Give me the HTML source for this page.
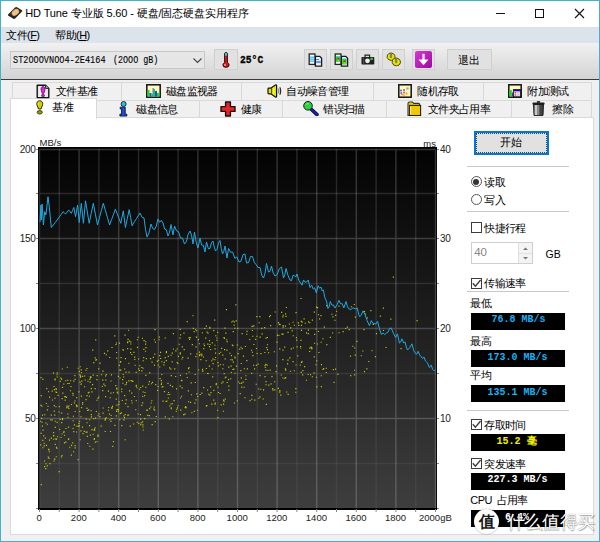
<!DOCTYPE html><html><head><meta charset="utf-8"><style>
*{margin:0;padding:0;box-sizing:border-box}
html,body{width:600px;height:542px;overflow:hidden;background:#f0f0f0;font-family:"Liberation Sans",sans-serif;position:relative}
.a{position:absolute}
.t{position:absolute;white-space:nowrap;line-height:1}
.btn{position:absolute;background:#e1e1e1;border:1px solid #cfcfcf}
.lcd{position:absolute;background:#000;font-family:"Liberation Mono",monospace;font-weight:bold;white-space:nowrap;line-height:1}
</style></head><body>
<div class="a" style="left:0;top:0;width:600px;height:542px;border:1px solid #40b2cf;background:#f0f0f0"></div>
<div class="a" style="left:1px;top:1px;width:598px;height:26px;background:#fff"></div>
<div class="a" style="left:1px;top:27px;width:598px;height:15.5px;background:#dce3eb"></div>
<div class="a" style="left:1px;top:42.5px;width:598px;height:36.5px;background:linear-gradient(#f1f1f1,#d3d3d3)"></div>
<div class="a" style="left:1px;top:79px;width:598px;height:1px;background:#3a3a3a"></div>
<svg class="a" style="left:7px;top:6px" width="16" height="14" viewBox="0 0 16 14">
<path d="M1 8.5L8 1.5Q9 0.8 10 1.3L15 4.2Q15.8 4.8 15 5.6L8.2 12.6Q7.4 13.3 6.4 12.8L1.4 9.8Q0.6 9.2 1 8.5Z" fill="#262626"/>
<ellipse cx="8.4" cy="6.4" rx="4.2" ry="2.9" transform="rotate(-40 8.4 6.4)" fill="#f0b060"/>
<ellipse cx="8.4" cy="6.4" rx="2.6" ry="1.7" transform="rotate(-40 8.4 6.4)" fill="#f6cc90"/>
<circle cx="8.4" cy="6.4" r="1" fill="#b8b8b8"/></svg>
<div class="t" style="left:25.3px;top:8px;font-size:11px;color:#000;letter-spacing:-0.12px">HD Tune 专业版 5.60 - 硬盘/固态硬盘实用程序</div>
<div class="a" style="left:496px;top:13px;width:9px;height:1px;background:#111"></div>
<div class="a" style="left:535px;top:9px;width:9px;height:9px;border:1px solid #111"></div>
<svg class="a" style="left:574px;top:8px" width="11" height="11"><path d="M1 1L10 10M10 1L1 10" stroke="#111" stroke-width="1.1"/></svg>
<div class="t" style="left:6.3px;top:30px;font-size:11px;color:#000;letter-spacing:-0.6px;">文件(<u>F</u>)</div>
<div class="t" style="left:55.3px;top:30px;font-size:11px;color:#000;letter-spacing:-0.6px;">帮助(<u>H</u>)</div>
<div class="a" style="left:10px;top:51px;width:195px;height:18px;background:#e6e6e6;border:1px solid #c8c8c8"></div>
<div class="t" style="left:13.2px;top:54.5px;font-size:10.5px;color:#000;-webkit-text-stroke:0.1px #000;font-family:&quot;Liberation Mono&quot;,monospace;transform-origin:0 0;transform:scaleX(0.816)">ST2OOOVNOO4-2E4164</div>
<div class="t" style="left:112.5px;top:54.5px;font-size:10.5px;color:#000;-webkit-text-stroke:0.1px #000;font-family:&quot;Liberation Mono&quot;,monospace;transform-origin:0 0;transform:scaleX(0.80)">(2OOO gB)</div>
<svg class="a" style="left:193px;top:58px" width="9" height="6"><path d="M0.5 0.5L4.5 4.5L8.5 0.5" stroke="#444" fill="none" stroke-width="1.1"/></svg>
<div class="btn" style="left:214px;top:49px;width:24px;height:21px"></div>
<svg class="a" style="left:221px;top:51.5px" width="10" height="16" viewBox="0 0 10 16">
<path d="M3.6 2Q3.6 0.6 5 0.6Q6.4 0.6 6.4 2V10.4Q8.1 11.4 8.1 13Q8.1 15.3 5 15.3Q1.9 15.3 1.9 13Q1.9 11.4 3.6 10.4Z" fill="#e81010" stroke="#151515" stroke-width="1"/>
<rect x="4.1" y="1.1" width="1.8" height="2.6" fill="#40d8f0"/><circle cx="4" cy="13" r="0.8" fill="#fff"/></svg>
<div class="t" style="left:239.5px;top:54.2px;font-size:11.5px;color:#000;-webkit-text-stroke:0.3px #000;font-family:&quot;Liberation Mono&quot;,monospace;font-weight:bold;transform-origin:0 0;transform:scaleX(0.84)">25°C</div>
<div class="btn" style="left:303.5px;top:49px;width:23px;height:21px"></div>
<div class="btn" style="left:329.5px;top:49px;width:23px;height:21px"></div>
<div class="btn" style="left:355.5px;top:49px;width:23px;height:21px"></div>
<div class="btn" style="left:381.5px;top:49px;width:23px;height:21px"></div>
<div class="btn" style="left:412px;top:49px;width:23px;height:21px"></div>
<svg class="a" style="left:308px;top:52.5px" width="15" height="14" viewBox="0 0 15 14">
<rect x="1.2" y="1" width="5.8" height="10.4" fill="#fff" stroke="#222" stroke-width="1.3"/><rect x="2" y="3.6" width="4.4" height="1.1" fill="#20a8f0"/><rect x="2" y="5.6" width="4.4" height="1.1" fill="#20a8f0"/><rect x="2" y="7.6" width="4.4" height="1.1" fill="#20a8f0"/>
<path d="M7.4 3.4H11.8L13.6 5.2V13.2H7.4Z" fill="#f2f2f2" stroke="#1a1a1a" stroke-width="1.3"/><rect x="8.2" y="6" width="2.6" height="1" fill="#2080f0"/><rect x="8.2" y="7.9" width="4.6" height="2.2" fill="#5a9af0"/></svg>
<svg class="a" style="left:334px;top:52.5px" width="15" height="14" viewBox="0 0 15 14">
<rect x="1.2" y="1" width="5.8" height="10.4" fill="#fff" stroke="#222" stroke-width="1.3"/><rect x="2" y="3.4" width="4.4" height="5.4" fill="#20d020"/><rect x="2" y="3.2" width="4.4" height="1" fill="#40c8f0"/><circle cx="4.3" cy="5.8" r="1" fill="#d03010"/><rect x="3.6" y="6.8" width="1.6" height="1.4" fill="#c8d020"/>
<path d="M7.4 3.4H11.8L13.6 5.2V13.2H7.4Z" fill="#f2f2f2" stroke="#1a1a1a" stroke-width="1.3"/><rect x="8.2" y="5.8" width="4.4" height="5.6" fill="#20d020"/><rect x="8.2" y="5.6" width="4.4" height="1" fill="#40c8f0"/><circle cx="10.5" cy="8.3" r="1" fill="#c03010"/><rect x="9.6" y="9.4" width="2" height="1.4" fill="#c8d020"/></svg>
<svg class="a" style="left:360.5px;top:53.5px" width="14" height="11" viewBox="0 0 14 11">
<path d="M4 3.4V1.2H8.6V3.4" fill="none" stroke="#222" stroke-width="1.2"/><rect x="0.5" y="3" width="12.8" height="7.6" rx="0.8" fill="#202020"/><rect x="2.2" y="3.4" width="1" height="7" fill="#555"/>
<circle cx="6.5" cy="6.8" r="2.4" fill="#f0f0f0"/><rect x="9.4" y="3.8" width="2.4" height="2.3" fill="#20d030"/></svg>
<svg class="a" style="left:386px;top:52px" width="16" height="15" viewBox="0 0 16 15">
<path d="M1.2 5.6Q0.8 2.6 3 1.4Q5.4 0.4 7.6 1.8Q9.4 3.2 9 5.8Q8.4 8.2 5.4 8.4Q2 8.4 1.2 5.6Z" fill="#e6e600" stroke="#3c3c08" stroke-width="0.9"/>
<path d="M6.2 10.6Q5.8 7.4 8.2 6.4Q10.8 5.4 13 7Q14.8 8.6 14.4 11Q13.6 13.6 10.4 13.8Q7 13.8 6.2 10.6Z" fill="#e6e600" stroke="#3c3c08" stroke-width="0.9"/>
<rect x="4.2" y="1.6" width="1.5" height="4.2" rx="0.75" fill="#8c8c84" stroke="#444" stroke-width="0.4"/><rect x="9.4" y="6.8" width="1.5" height="4.2" rx="0.75" fill="#8c8c84" stroke="#444" stroke-width="0.4"/></svg>
<svg class="a" style="left:415px;top:51px" width="17" height="17" viewBox="0 0 17 17">
<defs><linearGradient id="pg" x1="0" y1="0" x2="1" y2="1"><stop offset="0" stop-color="#d838d8"/><stop offset="1" stop-color="#9a0a9a"/></linearGradient></defs>
<rect x="0" y="0" width="17" height="17" rx="2" fill="url(#pg)"/><path d="M8.5 2.8V10" stroke="#fff" stroke-width="2.2"/><path d="M3.6 8.6H13.4L8.5 14.2Z" fill="#fff"/></svg>
<div class="btn" style="left:446.5px;top:49px;width:45px;height:21px"></div>
<div class="t" style="left:458.3px;top:54.5px;font-size:11px;color:#000;letter-spacing:-0.6px;">退出</div>
<div class="a" style="left:12px;top:82px;width:580px;height:18px;background:#f0f0f0;border:1px solid #d9d9d9;border-bottom:none"></div>
<div class="a" style="left:121px;top:82px;width:1px;height:18px;background:#d9d9d9"></div>
<div class="a" style="left:241px;top:82px;width:1px;height:18px;background:#d9d9d9"></div>
<div class="a" style="left:373px;top:82px;width:1px;height:18px;background:#d9d9d9"></div>
<div class="a" style="left:483px;top:82px;width:1px;height:18px;background:#d9d9d9"></div>
<div class="a" style="left:10px;top:100px;width:582px;height:17px;background:#f0f0f0;border:1px solid #d9d9d9;border-bottom:none"></div>
<div class="a" style="left:199px;top:100px;width:1px;height:17px;background:#d9d9d9"></div>
<div class="a" style="left:282px;top:100px;width:1px;height:17px;background:#d9d9d9"></div>
<div class="a" style="left:386px;top:100px;width:1px;height:17px;background:#d9d9d9"></div>
<div class="a" style="left:511px;top:100px;width:1px;height:17px;background:#d9d9d9"></div>
<div class="a" style="left:10px;top:117px;width:584px;height:418px;background:#fff;border:1px solid #dadada"></div>
<div class="a" style="left:10px;top:98px;width:87px;height:21px;background:#fff;border:1px solid #d9d9d9;border-bottom:none"></div>
<div class="t" style="left:55.8px;top:86px;font-size:11px;color:#000;letter-spacing:-0.6px;">文件基准</div>
<div class="t" style="left:165.8px;top:86px;font-size:11px;color:#000;letter-spacing:-0.6px;">磁盘监视器</div>
<div class="t" style="left:286.3px;top:86px;font-size:11px;color:#000;letter-spacing:-0.6px;">自动噪音管理</div>
<div class="t" style="left:417.3px;top:86px;font-size:11px;color:#000;letter-spacing:-0.6px;">随机存取</div>
<div class="t" style="left:527.3px;top:86px;font-size:11px;color:#000;letter-spacing:-0.6px;">附加测试</div>
<div class="t" style="left:52.3px;top:102px;font-size:11px;color:#000;letter-spacing:-0.6px;">基准</div>
<div class="t" style="left:136.3px;top:103.5px;font-size:11px;color:#000;letter-spacing:-0.6px;">磁盘信息</div>
<div class="t" style="left:240.8px;top:103.5px;font-size:11px;color:#000;letter-spacing:-0.6px;">健康</div>
<div class="t" style="left:323.3px;top:103.5px;font-size:11px;color:#000;letter-spacing:-0.6px;">错误扫描</div>
<div class="t" style="left:427.8px;top:103.5px;font-size:11px;color:#000;letter-spacing:-0.6px;">文件夹占用率</div>
<div class="t" style="left:552.3px;top:103.5px;font-size:11px;color:#000;letter-spacing:-0.6px;">擦除</div>
<svg class="a" style="left:35.5px;top:83.5px" width="14" height="15" viewBox="0 0 14 15">
<defs><linearGradient id="dg" x1="0" x2="1"><stop offset="0" stop-color="#d8d8d8"/><stop offset="0.3" stop-color="#fafafa"/><stop offset="1" stop-color="#e4e4e4"/></linearGradient></defs>
<path d="M1.2 1.2H9.6L12.8 4.4V13.6H1.2Z" fill="url(#dg)" stroke="#151515" stroke-width="1.4" stroke-linejoin="round"/>
<path d="M9.6 1.2V4.4H12.8" fill="#bbb" stroke="#151515" stroke-width="0.9"/>
<path d="M7 2.6C8.9 2.6 9.3 4.4 8.8 6.4L7.8 9.6H6.2L5.2 6.4C4.7 4.4 5.1 2.6 7 2.6Z" fill="#e028e0" stroke="#5a105a" stroke-width="0.8"/>
<ellipse cx="7" cy="11.6" rx="1.6" ry="1.2" fill="#c818c8" stroke="#5a105a" stroke-width="0.7"/></svg>
<svg class="a" style="left:36px;top:99.5px" width="7.5" height="15" viewBox="0 0 7.5 15">
<path d="M3.75 0.8C6.2 0.8 7 2.6 6.6 4.8L5 9H2.5L0.9 4.8C0.5 2.6 1.3 0.8 3.75 0.8Z" fill="#d0d000" stroke="#2e2e08" stroke-width="1"/>
<path d="M3.2 2.2C2.2 2.6 2.1 4 2.6 5.5" stroke="#f4f480" stroke-width="0.8" fill="none"/>
<ellipse cx="3.75" cy="12.3" rx="2.6" ry="1.7" fill="#a0a000" stroke="#2e2e08" stroke-width="0.9"/></svg>
<svg class="a" style="left:146px;top:84px" width="15" height="14" viewBox="0 0 15 14">
<rect x="0.8" y="0.8" width="13.4" height="12.4" fill="#fff8c0" stroke="#111" stroke-width="1.5"/>
<rect x="1.5" y="6" width="2" height="6.5" fill="#10e010"/><rect x="3.5" y="9" width="2" height="3.5" fill="#3040ff"/><rect x="5.5" y="10" width="1.5" height="2.5" fill="#10e010"/>
<rect x="7" y="5" width="2" height="7.5" fill="#10e010"/><rect x="9" y="7" width="2" height="5.5" fill="#3040ff"/><rect x="11" y="9" width="2.5" height="3.5" fill="#10e010"/><rect x="6.5" y="4" width="1.2" height="8.5" fill="#4a8ad0"/></svg>
<svg class="a" style="left:267px;top:83.5px" width="15" height="14" viewBox="0 0 15 14">
<path d="M1 5Q1 4.2 1.8 4.2H3.8L8.4 1Q9.6 0.4 9.6 1.8V12.2Q9.6 13.6 8.4 13L3.8 9.8H1.8Q1 9.8 1 9Z" fill="#e4e400" stroke="#111" stroke-width="1.2" stroke-linejoin="round"/>
<path d="M4.6 4.4V9.6" stroke="#2a2a2a" stroke-width="0.9"/><path d="M6.6 3.4V10.6" stroke="#f8f890" stroke-width="0.8"/>
<path d="M11.4 4.6Q12.6 7 11.4 9.4" stroke="#666" fill="none" stroke-width="1"/><path d="M12.8 3.2Q14.6 7 12.8 10.8" stroke="#222" fill="none" stroke-width="1.1"/></svg>
<svg class="a" style="left:398px;top:84px" width="14" height="14" viewBox="0 0 14 14">
<rect x="0.8" y="0.8" width="12.4" height="12.4" fill="#fff8b0" stroke="#111" stroke-width="1.5"/>
<circle cx="3" cy="6.5" r="0.9" fill="#5050ff"/><circle cx="6" cy="6" r="0.9" fill="#5050ff"/><circle cx="6" cy="8.5" r="0.9" fill="#ff3030"/><circle cx="3.2" cy="9" r="0.9" fill="#5060ff"/><circle cx="4" cy="10.5" r="0.9" fill="#ff8040"/><circle cx="8.5" cy="9.5" r="0.9" fill="#ff8040"/><circle cx="6" cy="11" r="0.8" fill="#ff6040"/><circle cx="9.5" cy="4.5" r="1.3" fill="#a0a0f0"/></svg>
<svg class="a" style="left:508px;top:84px" width="14" height="14" viewBox="0 0 14 14">
<rect x="0.8" y="0.8" width="12.4" height="12.4" fill="#fff8c0" stroke="#111" stroke-width="1.5"/>
<rect x="1.5" y="6" width="2.2" height="6.5" fill="#10e010"/><rect x="3.7" y="8.5" width="1.8" height="4" fill="#3040ff"/>
<rect x="5.4" y="5.6" width="7.2" height="7.2" fill="#f2e4e4" stroke="#111" stroke-width="0.9"/><rect x="5.9" y="6" width="6.5" height="1.3" fill="#0000e0"/><circle cx="7.3" cy="8.8" r="0.7" fill="red"/><circle cx="7.3" cy="11" r="0.7" fill="red"/><rect x="8.6" y="8.4" width="3" height="0.8" fill="#e0a0a0"/><rect x="8.6" y="10.6" width="3" height="0.8" fill="#a0a0e0"/></svg>
<svg class="a" style="left:118.5px;top:100.5px" width="9" height="16" viewBox="0 0 9 16">
<circle cx="4.6" cy="3" r="2.5" fill="#22c4f4" stroke="#1a1a1a" stroke-width="0.9"/><path d="M1.2 6.2H6.2V13.2H7.8V15H0.9V13.2H2.6V7.9H1.2Z" fill="#1252f0" stroke="#111" stroke-width="0.9" stroke-linejoin="round"/></svg>
<svg class="a" style="left:219.5px;top:100.5px" width="16" height="16" viewBox="0 0 16 16">
<path d="M5.6 1H10.4V5.6H15V10.4H10.4V15H5.6V10.4H1V5.6H5.6Z" fill="#e82424" stroke="#111" stroke-width="1.4" stroke-linejoin="round"/></svg>
<svg class="a" style="left:303px;top:101px" width="16" height="15" viewBox="0 0 16 15">
<path d="M8.5 8.5L14 13.6" stroke="#111" stroke-width="3.6" stroke-linecap="round"/><path d="M8.5 8.5L14 13.6" stroke="#1818c0" stroke-width="2.2" stroke-linecap="round"/>
<circle cx="5" cy="4.8" r="4.3" fill="#30d040" stroke="#1a1a1a" stroke-width="1"/><path d="M3 3.6Q4 2.4 5.6 2.6" stroke="#a0ffa0" stroke-width="0.8" fill="none"/></svg>
<svg class="a" style="left:407px;top:100.5px" width="14.5" height="15.5" viewBox="0 0 14.5 15.5">
<path d="M1 2.6Q1 1 2.6 1H5.4L6.8 2.4H11.6Q12.6 2.4 12.6 3.4V14.5H1Z" fill="#e8d000" stroke="#333" stroke-width="1.1"/><rect x="2.6" y="4.4" width="11" height="10.2" fill="#f0c800" stroke="#1c1c1c" stroke-width="1.1"/><path d="M3.6 5.4V13.6" stroke="#fff8a0" stroke-width="0.9"/></svg>
<svg class="a" style="left:532px;top:101px" width="13" height="15" viewBox="0 0 13 15">
<rect x="0.4" y="1.6" width="12.2" height="2.2" rx="1" fill="#222"/><rect x="4.8" y="0" width="3.4" height="2" rx="0.8" fill="#333"/>
<path d="M1.5 3.4H11.5L11 14.4H2Z" fill="#3a3a3a" stroke="#111" stroke-width="0.9"/><rect x="2.6" y="4" width="2.4" height="10" fill="#c8c8c8"/><rect x="5" y="4" width="2.6" height="10" fill="#8a8a8a"/><rect x="7.6" y="4" width="2.6" height="10" fill="#444"/></svg>
<svg width="600" height="542" style="position:absolute;left:0;top:0">
<defs><linearGradient id="cg" x1="0" y1="0" x2="0" y2="1"><stop offset="0" stop-color="#030303"/><stop offset="0.5" stop-color="#1f1f1f"/><stop offset="1" stop-color="#3e3e3e"/></linearGradient><linearGradient id="mg" gradientUnits="userSpaceOnUse" x1="0" y1="149" x2="0" y2="508"><stop offset="0" stop-color="#fff" stop-opacity="0.14"/><stop offset="1" stop-color="#fff" stop-opacity="0.045"/></linearGradient></defs>
<rect x="38" y="147" width="399" height="363" fill="#000"/>
<rect x="40" y="149" width="396" height="359" fill="url(#cg)"/>
<path d="M59.30 149V508M98.90 149V508M138.50 149V508M178.10 149V508M217.70 149V508M257.30 149V508M296.90 149V508M336.50 149V508M376.10 149V508M415.70 149V508" stroke="url(#mg)" stroke-width="1.4" fill="none"/>
<path d="M40 193.50H436" stroke="#fff" stroke-opacity="0.128" stroke-width="1.4"/>
<path d="M40 283.50H436" stroke="#fff" stroke-opacity="0.104" stroke-width="1.4"/>
<path d="M40 373.50H436" stroke="#fff" stroke-opacity="0.081" stroke-width="1.4"/>
<path d="M40 463.50H436" stroke="#fff" stroke-opacity="0.057" stroke-width="1.4"/>
<path d="M39.50 149V508M79.10 149V508M118.70 149V508M158.30 149V508M197.90 149V508M237.50 149V508M277.10 149V508M316.70 149V508M356.30 149V508M395.90 149V508M435.50 149V508M40 149.50H436M40 238.50H436M40 328.50H436M40 418.50H436" stroke="#fff" stroke-opacity="0.19" stroke-width="1.4" fill="none"/>
<path d="M39.50 509V512M59.30 509V512M79.10 509V512M98.90 509V512M118.70 509V512M138.50 509V512M158.30 509V512M178.10 509V512M197.90 509V512M217.70 509V512M237.50 509V512M257.30 509V512M277.10 509V512M296.90 509V512M316.70 509V512M336.50 509V512M356.30 509V512M376.10 509V512M395.90 509V512M415.70 509V512M435.50 509V512M36 149.50H38M437 149.50H439M36 193.50H38M437 193.50H439M36 238.50H38M437 238.50H439M36 283.50H38M437 283.50H439M36 328.50H38M437 328.50H439M36 373.50H38M437 373.50H439M36 418.50H38M437 418.50H439M36 463.50H38M437 463.50H439M36 508.50H38M437 508.50H439" stroke="#888" stroke-width="1" fill="none"/>
<path d="M164.7 337.4h1.15v1.15h-1.15zM246.3 360.1h1.15v1.15h-1.15zM54.4 379.3h1.15v1.15h-1.15zM203.4 343.4h1.15v1.15h-1.15zM151.5 361.6h1.15v1.15h-1.15zM354.2 347.4h1.15v1.15h-1.15zM183.4 332.5h1.15v1.15h-1.15zM119.3 369.5h1.15v1.15h-1.15zM265.4 381.1h1.15v1.15h-1.15zM309.1 350.9h1.15v1.15h-1.15zM85.5 369.7h1.15v1.15h-1.15zM228.3 385.5h1.15v1.15h-1.15zM160.8 383.8h1.15v1.15h-1.15zM215.6 384.0h1.15v1.15h-1.15zM222.5 381.3h1.15v1.15h-1.15zM188.5 367.0h1.15v1.15h-1.15zM104.7 418.3h1.15v1.15h-1.15zM89.8 434.6h1.15v1.15h-1.15zM71.0 444.8h1.15v1.15h-1.15zM147.2 414.8h1.15v1.15h-1.15zM107.8 390.6h1.15v1.15h-1.15zM266.8 349.1h1.15v1.15h-1.15zM182.2 356.8h1.15v1.15h-1.15zM277.8 387.8h1.15v1.15h-1.15zM193.6 331.0h1.15v1.15h-1.15zM65.9 396.8h1.15v1.15h-1.15zM60.2 377.4h1.15v1.15h-1.15zM180.0 334.3h1.15v1.15h-1.15zM276.4 341.5h1.15v1.15h-1.15zM180.2 409.6h1.15v1.15h-1.15zM226.3 349.6h1.15v1.15h-1.15zM141.9 337.7h1.15v1.15h-1.15zM96.4 399.7h1.15v1.15h-1.15zM308.0 321.3h1.15v1.15h-1.15zM125.9 383.4h1.15v1.15h-1.15zM127.3 341.2h1.15v1.15h-1.15zM50.8 437.5h1.15v1.15h-1.15zM124.9 358.0h1.15v1.15h-1.15zM72.6 420.2h1.15v1.15h-1.15zM224.0 349.1h1.15v1.15h-1.15zM192.4 315.2h1.15v1.15h-1.15zM319.0 318.3h1.15v1.15h-1.15zM96.3 379.1h1.15v1.15h-1.15zM251.2 398.7h1.15v1.15h-1.15zM290.1 327.3h1.15v1.15h-1.15zM207.0 372.9h1.15v1.15h-1.15zM152.8 356.8h1.15v1.15h-1.15zM201.3 392.5h1.15v1.15h-1.15zM176.2 408.7h1.15v1.15h-1.15zM201.9 370.6h1.15v1.15h-1.15zM241.6 333.1h1.15v1.15h-1.15zM41.5 421.7h1.15v1.15h-1.15zM165.5 400.9h1.15v1.15h-1.15zM80.9 383.4h1.15v1.15h-1.15zM256.3 316.0h1.15v1.15h-1.15zM234.6 357.4h1.15v1.15h-1.15zM245.3 375.2h1.15v1.15h-1.15zM363.4 329.1h1.15v1.15h-1.15zM67.9 426.5h1.15v1.15h-1.15zM99.5 362.6h1.15v1.15h-1.15zM124.5 384.2h1.15v1.15h-1.15zM102.2 379.6h1.15v1.15h-1.15zM115.4 343.9h1.15v1.15h-1.15zM253.3 343.9h1.15v1.15h-1.15zM280.2 394.5h1.15v1.15h-1.15zM80.3 430.3h1.15v1.15h-1.15zM144.1 418.1h1.15v1.15h-1.15zM97.5 415.2h1.15v1.15h-1.15zM74.4 400.4h1.15v1.15h-1.15zM67.9 438.8h1.15v1.15h-1.15zM72.2 442.3h1.15v1.15h-1.15zM214.7 402.4h1.15v1.15h-1.15zM143.1 357.1h1.15v1.15h-1.15zM82.1 375.8h1.15v1.15h-1.15zM160.1 357.9h1.15v1.15h-1.15zM232.5 320.5h1.15v1.15h-1.15zM136.4 387.2h1.15v1.15h-1.15zM112.9 441.0h1.15v1.15h-1.15zM206.4 404.9h1.15v1.15h-1.15zM191.3 412.2h1.15v1.15h-1.15zM171.9 386.0h1.15v1.15h-1.15zM195.8 336.5h1.15v1.15h-1.15zM67.2 379.7h1.15v1.15h-1.15zM72.5 394.5h1.15v1.15h-1.15zM133.3 351.8h1.15v1.15h-1.15zM211.6 342.3h1.15v1.15h-1.15zM159.2 366.4h1.15v1.15h-1.15zM222.7 364.2h1.15v1.15h-1.15zM41.9 414.6h1.15v1.15h-1.15zM56.0 391.8h1.15v1.15h-1.15zM265.4 369.5h1.15v1.15h-1.15zM190.0 401.8h1.15v1.15h-1.15zM287.6 393.8h1.15v1.15h-1.15zM93.6 429.5h1.15v1.15h-1.15zM128.5 371.6h1.15v1.15h-1.15zM80.4 416.2h1.15v1.15h-1.15zM281.1 311.8h1.15v1.15h-1.15zM233.6 324.5h1.15v1.15h-1.15zM323.7 326.6h1.15v1.15h-1.15zM320.8 386.1h1.15v1.15h-1.15zM230.2 378.2h1.15v1.15h-1.15zM287.5 331.8h1.15v1.15h-1.15zM326.1 305.1h1.15v1.15h-1.15zM63.4 431.0h1.15v1.15h-1.15zM300.1 347.4h1.15v1.15h-1.15zM219.5 392.9h1.15v1.15h-1.15zM400.5 348.1h1.15v1.15h-1.15zM121.1 388.5h1.15v1.15h-1.15zM129.1 340.5h1.15v1.15h-1.15zM41.4 405.7h1.15v1.15h-1.15zM94.2 429.7h1.15v1.15h-1.15zM40.7 484.1h1.15v1.15h-1.15zM151.6 424.0h1.15v1.15h-1.15zM266.8 336.9h1.15v1.15h-1.15zM58.6 471.1h1.15v1.15h-1.15zM150.0 358.0h1.15v1.15h-1.15zM236.7 400.2h1.15v1.15h-1.15zM317.0 343.4h1.15v1.15h-1.15zM150.2 406.4h1.15v1.15h-1.15zM172.3 416.2h1.15v1.15h-1.15zM140.2 386.9h1.15v1.15h-1.15zM191.8 344.1h1.15v1.15h-1.15zM124.7 413.9h1.15v1.15h-1.15zM213.2 330.1h1.15v1.15h-1.15zM171.7 352.5h1.15v1.15h-1.15zM199.3 354.1h1.15v1.15h-1.15zM63.9 442.3h1.15v1.15h-1.15zM123.1 376.4h1.15v1.15h-1.15zM48.4 457.8h1.15v1.15h-1.15zM222.2 354.5h1.15v1.15h-1.15zM135.7 384.8h1.15v1.15h-1.15zM252.3 335.7h1.15v1.15h-1.15zM157.0 389.8h1.15v1.15h-1.15zM309.0 350.9h1.15v1.15h-1.15zM264.4 364.9h1.15v1.15h-1.15zM44.0 466.0h1.15v1.15h-1.15zM223.0 403.5h1.15v1.15h-1.15zM311.3 348.3h1.15v1.15h-1.15zM299.7 364.4h1.15v1.15h-1.15zM53.1 435.3h1.15v1.15h-1.15zM116.3 388.6h1.15v1.15h-1.15zM160.0 351.8h1.15v1.15h-1.15zM332.8 369.1h1.15v1.15h-1.15zM230.9 355.1h1.15v1.15h-1.15zM96.4 441.2h1.15v1.15h-1.15zM94.6 388.0h1.15v1.15h-1.15zM111.4 346.9h1.15v1.15h-1.15zM295.8 337.0h1.15v1.15h-1.15zM105.2 379.4h1.15v1.15h-1.15zM177.3 362.9h1.15v1.15h-1.15zM222.3 368.2h1.15v1.15h-1.15zM114.3 424.8h1.15v1.15h-1.15zM55.7 456.2h1.15v1.15h-1.15zM139.0 388.7h1.15v1.15h-1.15zM170.5 354.7h1.15v1.15h-1.15zM315.9 306.5h1.15v1.15h-1.15zM49.3 463.0h1.15v1.15h-1.15zM136.7 421.7h1.15v1.15h-1.15zM110.4 420.8h1.15v1.15h-1.15zM166.2 400.6h1.15v1.15h-1.15zM70.4 385.9h1.15v1.15h-1.15zM64.9 396.0h1.15v1.15h-1.15zM72.4 427.9h1.15v1.15h-1.15zM212.1 376.3h1.15v1.15h-1.15zM86.6 407.7h1.15v1.15h-1.15zM183.6 349.0h1.15v1.15h-1.15zM134.5 364.7h1.15v1.15h-1.15zM262.6 398.4h1.15v1.15h-1.15zM235.3 304.3h1.15v1.15h-1.15zM55.5 388.0h1.15v1.15h-1.15zM140.1 418.5h1.15v1.15h-1.15zM278.7 323.8h1.15v1.15h-1.15zM118.5 401.3h1.15v1.15h-1.15zM118.3 403.8h1.15v1.15h-1.15zM111.3 417.9h1.15v1.15h-1.15zM251.0 349.7h1.15v1.15h-1.15zM251.8 329.9h1.15v1.15h-1.15zM307.7 333.1h1.15v1.15h-1.15zM258.1 388.4h1.15v1.15h-1.15zM115.9 342.4h1.15v1.15h-1.15zM102.6 407.4h1.15v1.15h-1.15zM279.5 324.0h1.15v1.15h-1.15zM149.1 408.1h1.15v1.15h-1.15zM81.9 426.6h1.15v1.15h-1.15zM88.8 395.7h1.15v1.15h-1.15zM225.9 309.1h1.15v1.15h-1.15zM101.7 385.9h1.15v1.15h-1.15zM110.4 392.5h1.15v1.15h-1.15zM187.7 390.3h1.15v1.15h-1.15zM385.5 346.9h1.15v1.15h-1.15zM54.7 426.8h1.15v1.15h-1.15zM251.8 351.7h1.15v1.15h-1.15zM264.3 351.9h1.15v1.15h-1.15zM208.8 365.6h1.15v1.15h-1.15zM130.6 380.1h1.15v1.15h-1.15zM109.1 356.9h1.15v1.15h-1.15zM205.8 367.9h1.15v1.15h-1.15zM55.7 438.8h1.15v1.15h-1.15zM60.9 456.4h1.15v1.15h-1.15zM92.4 448.5h1.15v1.15h-1.15zM65.2 380.2h1.15v1.15h-1.15zM354.0 369.7h1.15v1.15h-1.15zM120.2 369.6h1.15v1.15h-1.15zM54.2 458.5h1.15v1.15h-1.15zM105.0 396.1h1.15v1.15h-1.15zM285.0 313.3h1.15v1.15h-1.15zM379.8 315.6h1.15v1.15h-1.15zM282.5 333.6h1.15v1.15h-1.15zM178.7 343.7h1.15v1.15h-1.15zM326.3 344.0h1.15v1.15h-1.15zM295.5 312.1h1.15v1.15h-1.15zM97.5 397.8h1.15v1.15h-1.15zM127.5 338.8h1.15v1.15h-1.15zM176.7 348.4h1.15v1.15h-1.15zM264.7 366.8h1.15v1.15h-1.15zM222.8 410.7h1.15v1.15h-1.15zM133.8 395.9h1.15v1.15h-1.15zM194.8 381.9h1.15v1.15h-1.15zM256.5 352.9h1.15v1.15h-1.15zM135.7 385.6h1.15v1.15h-1.15zM196.3 393.3h1.15v1.15h-1.15zM44.8 437.5h1.15v1.15h-1.15zM274.1 381.2h1.15v1.15h-1.15zM107.2 350.3h1.15v1.15h-1.15zM315.4 364.2h1.15v1.15h-1.15zM127.0 342.2h1.15v1.15h-1.15zM169.2 405.4h1.15v1.15h-1.15zM314.0 342.7h1.15v1.15h-1.15zM142.1 395.9h1.15v1.15h-1.15zM45.9 444.8h1.15v1.15h-1.15zM165.8 352.1h1.15v1.15h-1.15zM158.5 339.2h1.15v1.15h-1.15zM172.8 333.0h1.15v1.15h-1.15zM65.3 441.6h1.15v1.15h-1.15zM65.4 427.9h1.15v1.15h-1.15zM119.2 419.2h1.15v1.15h-1.15zM150.6 402.4h1.15v1.15h-1.15zM118.9 342.5h1.15v1.15h-1.15zM138.8 369.9h1.15v1.15h-1.15zM233.9 321.4h1.15v1.15h-1.15zM199.0 355.0h1.15v1.15h-1.15zM123.4 415.3h1.15v1.15h-1.15zM105.6 417.3h1.15v1.15h-1.15zM416.5 320.1h1.15v1.15h-1.15zM346.8 326.5h1.15v1.15h-1.15zM122.7 349.7h1.15v1.15h-1.15zM285.1 369.5h1.15v1.15h-1.15zM176.9 407.3h1.15v1.15h-1.15zM73.2 380.6h1.15v1.15h-1.15zM141.3 370.3h1.15v1.15h-1.15zM217.4 386.7h1.15v1.15h-1.15zM288.8 323.4h1.15v1.15h-1.15zM325.7 367.7h1.15v1.15h-1.15zM263.0 389.3h1.15v1.15h-1.15zM131.6 402.4h1.15v1.15h-1.15zM364.8 313.5h1.15v1.15h-1.15zM165.7 360.1h1.15v1.15h-1.15zM320.6 341.7h1.15v1.15h-1.15zM79.1 420.9h1.15v1.15h-1.15zM207.4 332.5h1.15v1.15h-1.15zM119.5 377.4h1.15v1.15h-1.15zM232.7 331.1h1.15v1.15h-1.15zM272.4 389.5h1.15v1.15h-1.15zM205.6 360.2h1.15v1.15h-1.15zM128.0 329.7h1.15v1.15h-1.15zM287.0 363.3h1.15v1.15h-1.15zM77.7 425.5h1.15v1.15h-1.15zM282.4 349.6h1.15v1.15h-1.15zM279.3 390.1h1.15v1.15h-1.15zM110.5 380.4h1.15v1.15h-1.15zM54.7 443.8h1.15v1.15h-1.15zM78.9 425.3h1.15v1.15h-1.15zM237.2 327.8h1.15v1.15h-1.15zM303.5 318.3h1.15v1.15h-1.15zM61.8 368.4h1.15v1.15h-1.15zM201.2 355.0h1.15v1.15h-1.15zM142.1 421.3h1.15v1.15h-1.15zM242.9 355.5h1.15v1.15h-1.15zM190.9 394.2h1.15v1.15h-1.15zM220.6 404.3h1.15v1.15h-1.15zM176.0 388.3h1.15v1.15h-1.15zM153.3 408.6h1.15v1.15h-1.15zM176.6 361.9h1.15v1.15h-1.15zM137.6 336.7h1.15v1.15h-1.15zM317.9 330.9h1.15v1.15h-1.15zM224.6 377.2h1.15v1.15h-1.15zM179.5 337.6h1.15v1.15h-1.15zM62.0 417.9h1.15v1.15h-1.15zM45.8 402.9h1.15v1.15h-1.15zM292.5 321.7h1.15v1.15h-1.15zM130.0 352.1h1.15v1.15h-1.15zM104.6 419.5h1.15v1.15h-1.15zM116.0 410.8h1.15v1.15h-1.15zM208.9 346.0h1.15v1.15h-1.15zM130.2 343.4h1.15v1.15h-1.15zM219.8 364.2h1.15v1.15h-1.15zM42.5 429.6h1.15v1.15h-1.15zM184.4 413.6h1.15v1.15h-1.15zM284.9 368.3h1.15v1.15h-1.15zM226.6 381.9h1.15v1.15h-1.15zM280.7 374.4h1.15v1.15h-1.15zM181.0 395.7h1.15v1.15h-1.15zM121.1 391.2h1.15v1.15h-1.15zM233.9 402.4h1.15v1.15h-1.15zM167.4 382.8h1.15v1.15h-1.15zM55.4 406.2h1.15v1.15h-1.15zM155.7 415.9h1.15v1.15h-1.15zM274.3 389.3h1.15v1.15h-1.15zM275.5 371.1h1.15v1.15h-1.15zM269.6 369.6h1.15v1.15h-1.15zM216.3 337.4h1.15v1.15h-1.15zM54.2 414.5h1.15v1.15h-1.15zM292.5 361.0h1.15v1.15h-1.15zM139.3 365.2h1.15v1.15h-1.15zM205.8 325.6h1.15v1.15h-1.15zM61.0 378.6h1.15v1.15h-1.15zM45.4 463.2h1.15v1.15h-1.15zM198.8 343.2h1.15v1.15h-1.15zM98.4 413.3h1.15v1.15h-1.15zM86.8 435.8h1.15v1.15h-1.15zM89.7 376.2h1.15v1.15h-1.15zM322.4 368.9h1.15v1.15h-1.15zM320.9 364.0h1.15v1.15h-1.15zM316.1 360.2h1.15v1.15h-1.15zM354.7 354.5h1.15v1.15h-1.15zM103.9 352.8h1.15v1.15h-1.15zM181.5 387.3h1.15v1.15h-1.15zM95.8 410.9h1.15v1.15h-1.15zM282.4 377.4h1.15v1.15h-1.15zM258.2 397.7h1.15v1.15h-1.15zM167.8 397.4h1.15v1.15h-1.15zM158.8 336.6h1.15v1.15h-1.15zM185.0 405.9h1.15v1.15h-1.15zM40.6 432.8h1.15v1.15h-1.15zM56.3 447.8h1.15v1.15h-1.15zM145.4 347.0h1.15v1.15h-1.15zM173.5 400.0h1.15v1.15h-1.15zM117.2 392.6h1.15v1.15h-1.15zM300.9 329.8h1.15v1.15h-1.15zM217.0 409.7h1.15v1.15h-1.15zM337.3 373.8h1.15v1.15h-1.15zM223.5 337.1h1.15v1.15h-1.15zM109.6 397.2h1.15v1.15h-1.15zM195.0 329.2h1.15v1.15h-1.15zM80.9 372.2h1.15v1.15h-1.15zM269.9 314.9h1.15v1.15h-1.15zM52.9 372.5h1.15v1.15h-1.15zM140.7 422.3h1.15v1.15h-1.15zM54.6 378.6h1.15v1.15h-1.15zM59.6 418.9h1.15v1.15h-1.15zM390.3 318.5h1.15v1.15h-1.15zM86.2 407.7h1.15v1.15h-1.15zM297.8 322.3h1.15v1.15h-1.15zM125.4 371.5h1.15v1.15h-1.15zM362.3 350.4h1.15v1.15h-1.15zM61.5 455.0h1.15v1.15h-1.15zM300.6 371.8h1.15v1.15h-1.15zM80.6 369.3h1.15v1.15h-1.15zM225.3 332.5h1.15v1.15h-1.15zM300.9 324.8h1.15v1.15h-1.15zM53.9 458.5h1.15v1.15h-1.15zM93.8 438.1h1.15v1.15h-1.15zM214.1 319.5h1.15v1.15h-1.15zM95.0 417.6h1.15v1.15h-1.15zM253.0 364.7h1.15v1.15h-1.15zM142.6 360.2h1.15v1.15h-1.15zM104.6 430.9h1.15v1.15h-1.15zM61.9 386.8h1.15v1.15h-1.15zM223.8 337.8h1.15v1.15h-1.15zM77.6 459.0h1.15v1.15h-1.15zM46.2 388.1h1.15v1.15h-1.15zM40.7 395.1h1.15v1.15h-1.15zM207.6 372.9h1.15v1.15h-1.15zM93.2 418.2h1.15v1.15h-1.15zM115.7 398.5h1.15v1.15h-1.15zM230.8 371.9h1.15v1.15h-1.15zM264.4 376.1h1.15v1.15h-1.15zM197.1 395.9h1.15v1.15h-1.15zM169.1 393.9h1.15v1.15h-1.15zM142.5 391.4h1.15v1.15h-1.15zM181.3 380.1h1.15v1.15h-1.15zM41.8 425.6h1.15v1.15h-1.15zM86.5 422.2h1.15v1.15h-1.15zM313.8 311.6h1.15v1.15h-1.15zM230.5 365.5h1.15v1.15h-1.15zM48.0 391.2h1.15v1.15h-1.15zM79.5 381.5h1.15v1.15h-1.15zM51.6 390.5h1.15v1.15h-1.15zM46.8 423.7h1.15v1.15h-1.15zM310.5 346.6h1.15v1.15h-1.15zM87.4 380.7h1.15v1.15h-1.15zM87.0 409.9h1.15v1.15h-1.15zM371.5 350.2h1.15v1.15h-1.15zM103.3 383.5h1.15v1.15h-1.15zM189.7 337.0h1.15v1.15h-1.15zM170.3 368.6h1.15v1.15h-1.15zM366.3 368.3h1.15v1.15h-1.15zM202.5 370.4h1.15v1.15h-1.15zM66.7 366.7h1.15v1.15h-1.15zM93.7 438.9h1.15v1.15h-1.15zM53.2 434.9h1.15v1.15h-1.15zM145.3 374.8h1.15v1.15h-1.15zM279.2 348.3h1.15v1.15h-1.15zM157.6 385.9h1.15v1.15h-1.15zM143.3 348.8h1.15v1.15h-1.15zM87.7 392.3h1.15v1.15h-1.15zM151.0 383.2h1.15v1.15h-1.15zM259.5 375.1h1.15v1.15h-1.15zM217.4 362.1h1.15v1.15h-1.15zM159.5 378.1h1.15v1.15h-1.15zM187.5 357.6h1.15v1.15h-1.15zM254.3 399.6h1.15v1.15h-1.15zM153.8 339.2h1.15v1.15h-1.15zM63.9 434.7h1.15v1.15h-1.15zM82.1 402.1h1.15v1.15h-1.15zM169.8 384.8h1.15v1.15h-1.15zM239.3 382.9h1.15v1.15h-1.15zM223.0 399.6h1.15v1.15h-1.15zM89.0 425.1h1.15v1.15h-1.15zM265.5 337.6h1.15v1.15h-1.15zM260.2 388.7h1.15v1.15h-1.15zM273.8 351.2h1.15v1.15h-1.15zM318.4 351.9h1.15v1.15h-1.15zM188.0 401.2h1.15v1.15h-1.15zM232.3 345.1h1.15v1.15h-1.15zM95.8 359.1h1.15v1.15h-1.15zM204.2 327.9h1.15v1.15h-1.15zM257.5 363.5h1.15v1.15h-1.15zM239.1 348.5h1.15v1.15h-1.15zM269.0 316.0h1.15v1.15h-1.15zM300.4 339.8h1.15v1.15h-1.15zM194.3 402.5h1.15v1.15h-1.15zM209.5 343.9h1.15v1.15h-1.15zM354.1 374.3h1.15v1.15h-1.15zM82.5 433.1h1.15v1.15h-1.15zM202.0 368.8h1.15v1.15h-1.15zM234.4 372.7h1.15v1.15h-1.15zM272.2 388.0h1.15v1.15h-1.15zM285.1 377.1h1.15v1.15h-1.15zM158.1 359.7h1.15v1.15h-1.15zM297.2 355.3h1.15v1.15h-1.15zM142.4 426.4h1.15v1.15h-1.15zM261.2 327.8h1.15v1.15h-1.15zM332.4 316.3h1.15v1.15h-1.15zM241.2 386.5h1.15v1.15h-1.15zM63.9 396.2h1.15v1.15h-1.15zM315.5 328.4h1.15v1.15h-1.15zM78.3 391.3h1.15v1.15h-1.15zM213.2 399.5h1.15v1.15h-1.15zM209.3 326.7h1.15v1.15h-1.15zM161.2 361.2h1.15v1.15h-1.15zM190.1 353.3h1.15v1.15h-1.15zM345.2 327.9h1.15v1.15h-1.15zM151.9 381.8h1.15v1.15h-1.15zM188.5 337.3h1.15v1.15h-1.15zM134.3 358.9h1.15v1.15h-1.15zM53.4 385.9h1.15v1.15h-1.15zM311.8 376.2h1.15v1.15h-1.15zM89.2 445.7h1.15v1.15h-1.15zM349.9 355.5h1.15v1.15h-1.15zM120.1 361.1h1.15v1.15h-1.15zM214.3 344.7h1.15v1.15h-1.15zM181.7 346.3h1.15v1.15h-1.15zM375.9 333.0h1.15v1.15h-1.15zM144.1 395.0h1.15v1.15h-1.15zM258.6 322.2h1.15v1.15h-1.15zM108.2 406.9h1.15v1.15h-1.15zM82.0 403.7h1.15v1.15h-1.15zM154.3 353.5h1.15v1.15h-1.15zM88.6 391.7h1.15v1.15h-1.15zM90.9 416.3h1.15v1.15h-1.15zM295.5 364.4h1.15v1.15h-1.15zM309.2 322.2h1.15v1.15h-1.15zM109.9 430.9h1.15v1.15h-1.15zM55.6 388.8h1.15v1.15h-1.15zM156.7 360.6h1.15v1.15h-1.15zM285.8 306.9h1.15v1.15h-1.15zM138.1 368.3h1.15v1.15h-1.15zM40.4 404.8h1.15v1.15h-1.15zM56.5 374.2h1.15v1.15h-1.15zM134.1 356.5h1.15v1.15h-1.15zM73.2 431.0h1.15v1.15h-1.15zM74.6 447.3h1.15v1.15h-1.15zM214.3 359.2h1.15v1.15h-1.15zM89.1 419.2h1.15v1.15h-1.15zM350.2 375.0h1.15v1.15h-1.15zM285.4 315.8h1.15v1.15h-1.15zM177.8 355.8h1.15v1.15h-1.15zM92.6 374.5h1.15v1.15h-1.15zM133.1 423.4h1.15v1.15h-1.15zM175.3 350.3h1.15v1.15h-1.15zM94.6 427.2h1.15v1.15h-1.15zM251.1 372.8h1.15v1.15h-1.15zM270.5 383.3h1.15v1.15h-1.15zM84.1 375.4h1.15v1.15h-1.15zM63.2 431.9h1.15v1.15h-1.15zM212.5 363.1h1.15v1.15h-1.15zM179.7 328.8h1.15v1.15h-1.15zM72.3 392.8h1.15v1.15h-1.15zM228.2 366.5h1.15v1.15h-1.15zM43.2 435.3h1.15v1.15h-1.15zM136.8 339.2h1.15v1.15h-1.15zM154.1 409.5h1.15v1.15h-1.15zM325.8 371.9h1.15v1.15h-1.15zM163.3 364.3h1.15v1.15h-1.15zM55.9 446.7h1.15v1.15h-1.15zM232.3 368.9h1.15v1.15h-1.15zM70.9 403.9h1.15v1.15h-1.15zM55.4 438.0h1.15v1.15h-1.15zM41.1 417.8h1.15v1.15h-1.15zM149.1 372.3h1.15v1.15h-1.15zM170.4 403.4h1.15v1.15h-1.15zM153.9 364.6h1.15v1.15h-1.15zM115.2 385.0h1.15v1.15h-1.15zM352.3 345.7h1.15v1.15h-1.15zM154.4 329.0h1.15v1.15h-1.15zM155.2 384.0h1.15v1.15h-1.15zM50.7 414.6h1.15v1.15h-1.15zM72.8 415.7h1.15v1.15h-1.15zM200.3 359.1h1.15v1.15h-1.15zM84.0 386.2h1.15v1.15h-1.15zM76.6 405.3h1.15v1.15h-1.15zM253.3 325.3h1.15v1.15h-1.15zM237.6 353.1h1.15v1.15h-1.15zM68.3 405.4h1.15v1.15h-1.15zM252.0 325.7h1.15v1.15h-1.15zM79.3 374.3h1.15v1.15h-1.15zM338.4 305.6h1.15v1.15h-1.15zM131.2 392.5h1.15v1.15h-1.15zM122.1 379.1h1.15v1.15h-1.15zM104.7 417.9h1.15v1.15h-1.15zM87.2 442.9h1.15v1.15h-1.15zM317.9 314.2h1.15v1.15h-1.15zM251.3 394.8h1.15v1.15h-1.15zM300.0 345.9h1.15v1.15h-1.15zM83.7 430.8h1.15v1.15h-1.15zM111.3 407.8h1.15v1.15h-1.15zM186.6 321.0h1.15v1.15h-1.15zM45.3 422.4h1.15v1.15h-1.15zM53.7 405.0h1.15v1.15h-1.15zM301.6 321.6h1.15v1.15h-1.15zM69.2 446.7h1.15v1.15h-1.15zM266.9 344.2h1.15v1.15h-1.15zM220.1 351.7h1.15v1.15h-1.15zM42.3 378.8h1.15v1.15h-1.15zM57.5 394.8h1.15v1.15h-1.15zM145.2 386.7h1.15v1.15h-1.15zM255.8 364.8h1.15v1.15h-1.15zM284.3 377.8h1.15v1.15h-1.15zM302.3 370.0h1.15v1.15h-1.15zM235.9 365.6h1.15v1.15h-1.15zM196.3 353.4h1.15v1.15h-1.15zM181.4 358.4h1.15v1.15h-1.15zM92.2 349.5h1.15v1.15h-1.15zM214.5 348.3h1.15v1.15h-1.15zM105.0 375.4h1.15v1.15h-1.15zM70.8 454.6h1.15v1.15h-1.15zM177.4 405.2h1.15v1.15h-1.15zM66.1 407.2h1.15v1.15h-1.15zM48.9 439.6h1.15v1.15h-1.15zM124.1 395.1h1.15v1.15h-1.15zM115.7 415.3h1.15v1.15h-1.15zM271.4 376.0h1.15v1.15h-1.15zM92.6 433.7h1.15v1.15h-1.15zM121.7 399.9h1.15v1.15h-1.15zM196.0 330.2h1.15v1.15h-1.15zM199.5 353.8h1.15v1.15h-1.15zM230.3 359.2h1.15v1.15h-1.15zM45.2 468.0h1.15v1.15h-1.15zM61.6 398.0h1.15v1.15h-1.15zM76.0 431.4h1.15v1.15h-1.15zM74.6 410.9h1.15v1.15h-1.15zM266.6 364.6h1.15v1.15h-1.15zM167.4 393.9h1.15v1.15h-1.15zM159.1 355.0h1.15v1.15h-1.15zM214.5 403.6h1.15v1.15h-1.15zM90.8 414.1h1.15v1.15h-1.15zM331.3 313.7h1.15v1.15h-1.15zM63.2 383.4h1.15v1.15h-1.15zM97.5 435.8h1.15v1.15h-1.15zM102.4 370.5h1.15v1.15h-1.15zM284.9 325.5h1.15v1.15h-1.15zM322.4 338.2h1.15v1.15h-1.15zM372.7 323.8h1.15v1.15h-1.15zM281.4 333.5h1.15v1.15h-1.15zM207.0 389.4h1.15v1.15h-1.15zM287.4 359.5h1.15v1.15h-1.15zM123.4 419.3h1.15v1.15h-1.15zM148.8 415.0h1.15v1.15h-1.15zM102.2 390.1h1.15v1.15h-1.15zM120.8 412.3h1.15v1.15h-1.15zM154.6 421.0h1.15v1.15h-1.15zM43.6 445.3h1.15v1.15h-1.15zM77.6 367.7h1.15v1.15h-1.15zM170.7 408.2h1.15v1.15h-1.15zM130.3 341.4h1.15v1.15h-1.15zM234.3 327.7h1.15v1.15h-1.15zM47.7 456.5h1.15v1.15h-1.15zM86.4 395.0h1.15v1.15h-1.15zM108.9 413.6h1.15v1.15h-1.15zM232.8 361.6h1.15v1.15h-1.15zM145.1 341.2h1.15v1.15h-1.15zM56.6 421.8h1.15v1.15h-1.15zM179.6 385.6h1.15v1.15h-1.15zM249.4 400.0h1.15v1.15h-1.15zM193.7 410.8h1.15v1.15h-1.15zM189.0 338.9h1.15v1.15h-1.15zM138.0 358.4h1.15v1.15h-1.15zM116.4 404.5h1.15v1.15h-1.15zM59.1 428.9h1.15v1.15h-1.15zM40.4 377.1h1.15v1.15h-1.15zM185.9 373.2h1.15v1.15h-1.15zM275.9 365.3h1.15v1.15h-1.15zM249.1 338.9h1.15v1.15h-1.15zM223.5 400.5h1.15v1.15h-1.15zM243.6 386.7h1.15v1.15h-1.15zM131.9 380.6h1.15v1.15h-1.15zM217.2 417.0h1.15v1.15h-1.15zM56.7 372.3h1.15v1.15h-1.15zM354.8 316.6h1.15v1.15h-1.15zM79.6 366.2h1.15v1.15h-1.15zM73.9 402.4h1.15v1.15h-1.15zM307.6 373.9h1.15v1.15h-1.15zM332.1 332.4h1.15v1.15h-1.15zM240.5 346.7h1.15v1.15h-1.15zM186.7 376.9h1.15v1.15h-1.15zM62.2 392.6h1.15v1.15h-1.15zM164.7 416.3h1.15v1.15h-1.15zM202.9 356.4h1.15v1.15h-1.15zM56.9 436.2h1.15v1.15h-1.15zM153.7 406.4h1.15v1.15h-1.15zM175.7 410.7h1.15v1.15h-1.15zM314.1 333.8h1.15v1.15h-1.15zM67.3 413.4h1.15v1.15h-1.15zM231.2 321.4h1.15v1.15h-1.15zM268.2 384.5h1.15v1.15h-1.15zM199.7 393.9h1.15v1.15h-1.15zM209.3 394.6h1.15v1.15h-1.15zM194.6 373.9h1.15v1.15h-1.15zM85.5 431.5h1.15v1.15h-1.15zM79.2 410.9h1.15v1.15h-1.15zM61.2 412.5h1.15v1.15h-1.15zM61.1 422.0h1.15v1.15h-1.15zM168.7 418.3h1.15v1.15h-1.15zM145.7 358.0h1.15v1.15h-1.15zM236.7 344.4h1.15v1.15h-1.15zM117.8 375.8h1.15v1.15h-1.15zM218.7 353.0h1.15v1.15h-1.15zM348.6 329.0h1.15v1.15h-1.15zM161.0 382.4h1.15v1.15h-1.15zM164.6 357.1h1.15v1.15h-1.15zM268.0 352.2h1.15v1.15h-1.15zM211.3 360.2h1.15v1.15h-1.15zM286.1 391.4h1.15v1.15h-1.15zM109.4 419.2h1.15v1.15h-1.15zM231.8 344.4h1.15v1.15h-1.15zM121.2 425.0h1.15v1.15h-1.15zM119.7 413.1h1.15v1.15h-1.15zM293.7 370.2h1.15v1.15h-1.15zM304.1 366.0h1.15v1.15h-1.15zM56.1 391.8h1.15v1.15h-1.15zM264.1 327.1h1.15v1.15h-1.15zM363.9 371.0h1.15v1.15h-1.15zM190.7 382.3h1.15v1.15h-1.15zM126.0 381.8h1.15v1.15h-1.15zM320.4 315.0h1.15v1.15h-1.15zM242.6 381.5h1.15v1.15h-1.15zM75.8 404.6h1.15v1.15h-1.15zM270.1 325.0h1.15v1.15h-1.15zM144.4 391.9h1.15v1.15h-1.15zM292.8 347.4h1.15v1.15h-1.15zM135.2 409.2h1.15v1.15h-1.15zM154.8 341.6h1.15v1.15h-1.15zM252.4 355.1h1.15v1.15h-1.15zM53.0 432.1h1.15v1.15h-1.15zM90.8 388.0h1.15v1.15h-1.15zM295.3 388.1h1.15v1.15h-1.15zM167.7 355.8h1.15v1.15h-1.15zM76.2 406.1h1.15v1.15h-1.15zM246.4 330.8h1.15v1.15h-1.15zM246.2 333.7h1.15v1.15h-1.15zM195.4 346.3h1.15v1.15h-1.15zM382.9 329.9h1.15v1.15h-1.15zM228.0 379.1h1.15v1.15h-1.15zM128.3 362.7h1.15v1.15h-1.15zM51.9 399.4h1.15v1.15h-1.15zM382.8 307.6h1.15v1.15h-1.15zM313.7 356.3h1.15v1.15h-1.15zM278.0 322.1h1.15v1.15h-1.15zM44.1 414.2h1.15v1.15h-1.15zM73.9 424.3h1.15v1.15h-1.15zM98.2 368.3h1.15v1.15h-1.15zM124.6 439.2h1.15v1.15h-1.15zM224.7 398.6h1.15v1.15h-1.15zM116.6 391.6h1.15v1.15h-1.15zM316.2 386.3h1.15v1.15h-1.15zM92.0 384.0h1.15v1.15h-1.15zM267.3 369.9h1.15v1.15h-1.15zM84.6 379.4h1.15v1.15h-1.15zM116.2 387.5h1.15v1.15h-1.15zM313.5 372.5h1.15v1.15h-1.15zM170.7 375.1h1.15v1.15h-1.15zM228.3 389.6h1.15v1.15h-1.15zM201.2 353.6h1.15v1.15h-1.15zM122.3 382.7h1.15v1.15h-1.15zM278.4 334.7h1.15v1.15h-1.15zM310.0 374.2h1.15v1.15h-1.15zM86.5 431.6h1.15v1.15h-1.15zM110.9 374.3h1.15v1.15h-1.15zM112.9 392.2h1.15v1.15h-1.15zM40.1 444.3h1.15v1.15h-1.15zM215.0 352.5h1.15v1.15h-1.15zM78.8 370.8h1.15v1.15h-1.15zM296.5 346.3h1.15v1.15h-1.15zM184.7 407.0h1.15v1.15h-1.15zM231.8 359.3h1.15v1.15h-1.15zM61.9 419.1h1.15v1.15h-1.15zM212.4 358.5h1.15v1.15h-1.15zM53.5 460.4h1.15v1.15h-1.15zM266.2 347.0h1.15v1.15h-1.15zM148.1 383.7h1.15v1.15h-1.15zM300.5 297.9h1.15v1.15h-1.15zM146.8 409.6h1.15v1.15h-1.15zM93.9 428.6h1.15v1.15h-1.15zM105.7 374.1h1.15v1.15h-1.15zM116.0 351.9h1.15v1.15h-1.15zM140.2 424.0h1.15v1.15h-1.15zM142.7 429.4h1.15v1.15h-1.15zM213.3 389.8h1.15v1.15h-1.15zM161.2 373.9h1.15v1.15h-1.15zM255.1 338.8h1.15v1.15h-1.15zM179.7 353.4h1.15v1.15h-1.15zM282.6 314.7h1.15v1.15h-1.15zM142.2 385.6h1.15v1.15h-1.15zM198.9 351.5h1.15v1.15h-1.15zM171.6 361.3h1.15v1.15h-1.15zM240.7 377.3h1.15v1.15h-1.15zM91.4 391.3h1.15v1.15h-1.15zM233.3 368.5h1.15v1.15h-1.15zM195.4 399.3h1.15v1.15h-1.15zM98.2 396.4h1.15v1.15h-1.15zM90.5 410.2h1.15v1.15h-1.15zM145.9 409.7h1.15v1.15h-1.15zM145.1 343.5h1.15v1.15h-1.15zM309.3 347.6h1.15v1.15h-1.15zM282.3 316.3h1.15v1.15h-1.15zM211.6 368.4h1.15v1.15h-1.15zM55.2 391.4h1.15v1.15h-1.15zM282.3 359.1h1.15v1.15h-1.15zM123.9 417.0h1.15v1.15h-1.15zM51.7 419.4h1.15v1.15h-1.15zM203.2 387.1h1.15v1.15h-1.15zM265.2 363.8h1.15v1.15h-1.15zM127.1 414.7h1.15v1.15h-1.15zM67.5 406.6h1.15v1.15h-1.15zM215.0 356.9h1.15v1.15h-1.15zM148.8 381.0h1.15v1.15h-1.15zM208.9 340.1h1.15v1.15h-1.15zM142.3 424.3h1.15v1.15h-1.15zM317.0 307.1h1.15v1.15h-1.15zM282.6 325.0h1.15v1.15h-1.15zM157.7 364.4h1.15v1.15h-1.15zM215.2 335.2h1.15v1.15h-1.15zM356.4 340.8h1.15v1.15h-1.15zM235.6 320.3h1.15v1.15h-1.15zM208.1 393.7h1.15v1.15h-1.15zM363.9 311.1h1.15v1.15h-1.15zM265.4 384.2h1.15v1.15h-1.15zM56.7 376.4h1.15v1.15h-1.15zM226.5 341.0h1.15v1.15h-1.15zM80.0 376.6h1.15v1.15h-1.15zM215.7 383.1h1.15v1.15h-1.15zM209.3 327.6h1.15v1.15h-1.15zM221.2 382.6h1.15v1.15h-1.15zM132.3 380.9h1.15v1.15h-1.15zM94.6 357.3h1.15v1.15h-1.15zM128.1 414.4h1.15v1.15h-1.15zM54.7 420.7h1.15v1.15h-1.15zM58.7 406.0h1.15v1.15h-1.15zM124.5 334.5h1.15v1.15h-1.15zM141.2 404.8h1.15v1.15h-1.15zM80.0 375.4h1.15v1.15h-1.15zM350.7 306.2h1.15v1.15h-1.15zM392.8 276.5h1.15v1.15h-1.15zM254.0 368.3h1.15v1.15h-1.15zM69.9 390.2h1.15v1.15h-1.15zM192.8 327.8h1.15v1.15h-1.15zM216.3 339.7h1.15v1.15h-1.15zM205.2 337.5h1.15v1.15h-1.15zM76.2 397.0h1.15v1.15h-1.15zM366.6 317.3h1.15v1.15h-1.15zM333.5 381.8h1.15v1.15h-1.15zM336.0 310.7h1.15v1.15h-1.15zM240.2 370.0h1.15v1.15h-1.15zM315.9 376.7h1.15v1.15h-1.15zM205.8 405.6h1.15v1.15h-1.15zM210.1 348.9h1.15v1.15h-1.15zM174.2 368.3h1.15v1.15h-1.15zM329.8 336.8h1.15v1.15h-1.15zM48.1 448.8h1.15v1.15h-1.15zM244.8 345.9h1.15v1.15h-1.15zM160.8 380.0h1.15v1.15h-1.15zM244.4 397.2h1.15v1.15h-1.15zM196.9 409.7h1.15v1.15h-1.15zM74.5 445.1h1.15v1.15h-1.15zM45.2 468.2h1.15v1.15h-1.15zM107.9 409.7h1.15v1.15h-1.15zM135.7 400.2h1.15v1.15h-1.15zM120.5 357.0h1.15v1.15h-1.15zM292.6 335.2h1.15v1.15h-1.15zM64.6 399.5h1.15v1.15h-1.15zM94.8 441.5h1.15v1.15h-1.15zM304.7 322.7h1.15v1.15h-1.15zM78.5 422.9h1.15v1.15h-1.15zM211.3 403.6h1.15v1.15h-1.15zM171.8 403.2h1.15v1.15h-1.15zM127.1 348.0h1.15v1.15h-1.15zM298.2 324.8h1.15v1.15h-1.15zM293.8 324.7h1.15v1.15h-1.15zM95.3 359.5h1.15v1.15h-1.15zM259.3 316.1h1.15v1.15h-1.15zM368.2 360.9h1.15v1.15h-1.15zM180.0 397.4h1.15v1.15h-1.15zM136.9 346.8h1.15v1.15h-1.15zM135.6 371.8h1.15v1.15h-1.15zM334.4 319.7h1.15v1.15h-1.15zM187.9 368.0h1.15v1.15h-1.15zM374.8 356.0h1.15v1.15h-1.15zM130.4 348.6h1.15v1.15h-1.15zM217.1 331.8h1.15v1.15h-1.15zM224.6 358.3h1.15v1.15h-1.15zM85.5 399.1h1.15v1.15h-1.15zM67.5 416.7h1.15v1.15h-1.15zM370.3 310.0h1.15v1.15h-1.15zM105.7 354.2h1.15v1.15h-1.15zM142.1 402.3h1.15v1.15h-1.15zM68.7 382.9h1.15v1.15h-1.15zM295.2 391.7h1.15v1.15h-1.15zM225.4 376.5h1.15v1.15h-1.15zM238.1 381.4h1.15v1.15h-1.15zM246.8 368.3h1.15v1.15h-1.15zM290.7 348.3h1.15v1.15h-1.15zM127.4 406.1h1.15v1.15h-1.15zM53.8 389.1h1.15v1.15h-1.15zM301.5 361.1h1.15v1.15h-1.15zM129.7 425.5h1.15v1.15h-1.15zM279.2 391.5h1.15v1.15h-1.15zM163.9 391.0h1.15v1.15h-1.15zM48.8 451.2h1.15v1.15h-1.15zM40.1 420.7h1.15v1.15h-1.15zM256.3 335.7h1.15v1.15h-1.15zM86.4 367.9h1.15v1.15h-1.15zM241.0 382.6h1.15v1.15h-1.15zM104.5 385.0h1.15v1.15h-1.15zM143.5 340.0h1.15v1.15h-1.15zM46.7 465.3h1.15v1.15h-1.15zM243.8 368.2h1.15v1.15h-1.15zM291.6 330.3h1.15v1.15h-1.15zM114.2 335.3h1.15v1.15h-1.15zM259.6 336.5h1.15v1.15h-1.15zM131.1 400.2h1.15v1.15h-1.15zM68.3 407.9h1.15v1.15h-1.15zM43.7 442.7h1.15v1.15h-1.15zM289.3 357.3h1.15v1.15h-1.15zM119.8 361.5h1.15v1.15h-1.15zM323.1 368.1h1.15v1.15h-1.15zM89.1 378.7h1.15v1.15h-1.15zM53.7 410.6h1.15v1.15h-1.15zM70.0 380.2h1.15v1.15h-1.15zM311.2 347.0h1.15v1.15h-1.15zM46.8 409.3h1.15v1.15h-1.15zM335.0 368.5h1.15v1.15h-1.15zM116.4 409.1h1.15v1.15h-1.15zM144.9 350.7h1.15v1.15h-1.15zM307.9 329.5h1.15v1.15h-1.15zM47.4 405.7h1.15v1.15h-1.15zM169.1 367.3h1.15v1.15h-1.15zM224.4 327.6h1.15v1.15h-1.15zM102.5 412.6h1.15v1.15h-1.15zM141.2 366.9h1.15v1.15h-1.15zM229.3 352.7h1.15v1.15h-1.15zM99.3 416.0h1.15v1.15h-1.15zM128.3 380.3h1.15v1.15h-1.15zM76.3 425.7h1.15v1.15h-1.15zM129.0 390.3h1.15v1.15h-1.15zM93.2 362.1h1.15v1.15h-1.15zM284.1 346.6h1.15v1.15h-1.15zM245.3 378.8h1.15v1.15h-1.15zM125.1 403.0h1.15v1.15h-1.15zM118.8 364.8h1.15v1.15h-1.15zM100.6 425.6h1.15v1.15h-1.15zM161.5 386.3h1.15v1.15h-1.15zM74.3 375.0h1.15v1.15h-1.15zM217.8 365.3h1.15v1.15h-1.15zM240.7 362.9h1.15v1.15h-1.15zM338.5 332.2h1.15v1.15h-1.15zM226.2 339.2h1.15v1.15h-1.15zM162.5 400.5h1.15v1.15h-1.15zM183.1 414.0h1.15v1.15h-1.15zM80.4 383.7h1.15v1.15h-1.15zM54.4 397.7h1.15v1.15h-1.15zM89.6 381.6h1.15v1.15h-1.15zM66.4 405.6h1.15v1.15h-1.15zM73.0 451.2h1.15v1.15h-1.15zM59.7 380.8h1.15v1.15h-1.15zM81.0 407.0h1.15v1.15h-1.15zM360.7 355.2h1.15v1.15h-1.15zM203.9 345.0h1.15v1.15h-1.15zM139.9 414.1h1.15v1.15h-1.15zM151.2 400.2h1.15v1.15h-1.15zM89.9 377.4h1.15v1.15h-1.15zM81.2 380.5h1.15v1.15h-1.15zM138.2 422.8h1.15v1.15h-1.15zM163.7 361.8h1.15v1.15h-1.15zM112.2 445.8h1.15v1.15h-1.15zM44.0 460.4h1.15v1.15h-1.15zM142.4 367.7h1.15v1.15h-1.15zM185.6 407.0h1.15v1.15h-1.15zM198.1 369.4h1.15v1.15h-1.15zM137.5 413.4h1.15v1.15h-1.15zM91.4 429.1h1.15v1.15h-1.15zM172.9 348.4h1.15v1.15h-1.15zM58.5 411.4h1.15v1.15h-1.15zM170.6 407.2h1.15v1.15h-1.15zM122.4 348.9h1.15v1.15h-1.15zM165.9 351.0h1.15v1.15h-1.15zM67.2 382.9h1.15v1.15h-1.15zM217.9 391.9h1.15v1.15h-1.15zM221.1 347.8h1.15v1.15h-1.15zM80.8 395.5h1.15v1.15h-1.15zM239.6 393.1h1.15v1.15h-1.15zM296.2 339.6h1.15v1.15h-1.15zM88.1 409.3h1.15v1.15h-1.15zM206.5 331.4h1.15v1.15h-1.15zM241.6 348.0h1.15v1.15h-1.15zM125.6 399.3h1.15v1.15h-1.15zM117.7 409.1h1.15v1.15h-1.15zM111.9 405.8h1.15v1.15h-1.15zM95.2 339.3h1.15v1.15h-1.15zM110.6 414.9h1.15v1.15h-1.15zM49.0 396.6h1.15v1.15h-1.15zM255.6 383.7h1.15v1.15h-1.15zM203.2 348.0h1.15v1.15h-1.15zM201.8 332.2h1.15v1.15h-1.15zM42.2 447.2h1.15v1.15h-1.15zM131.3 353.9h1.15v1.15h-1.15zM117.8 410.7h1.15v1.15h-1.15zM210.4 392.0h1.15v1.15h-1.15zM300.9 361.8h1.15v1.15h-1.15zM335.1 314.8h1.15v1.15h-1.15zM197.9 339.0h1.15v1.15h-1.15zM124.1 368.4h1.15v1.15h-1.15zM234.3 356.4h1.15v1.15h-1.15zM116.2 357.5h1.15v1.15h-1.15zM68.2 438.2h1.15v1.15h-1.15zM195.3 356.1h1.15v1.15h-1.15zM305.9 379.7h1.15v1.15h-1.15zM260.4 353.0h1.15v1.15h-1.15zM194.6 373.9h1.15v1.15h-1.15zM180.9 379.8h1.15v1.15h-1.15zM300.7 320.8h1.15v1.15h-1.15zM251.5 325.8h1.15v1.15h-1.15zM50.3 419.3h1.15v1.15h-1.15zM179.9 374.8h1.15v1.15h-1.15zM223.6 373.1h1.15v1.15h-1.15zM342.6 331.0h1.15v1.15h-1.15zM179.7 352.3h1.15v1.15h-1.15zM168.0 391.9h1.15v1.15h-1.15zM48.4 449.3h1.15v1.15h-1.15zM96.6 375.1h1.15v1.15h-1.15zM74.5 378.8h1.15v1.15h-1.15zM188.5 371.4h1.15v1.15h-1.15zM61.5 433.4h1.15v1.15h-1.15zM282.6 326.5h1.15v1.15h-1.15zM274.6 311.4h1.15v1.15h-1.15zM207.3 343.5h1.15v1.15h-1.15zM311.8 319.5h1.15v1.15h-1.15zM175.1 375.9h1.15v1.15h-1.15zM302.1 374.3h1.15v1.15h-1.15zM261.6 333.3h1.15v1.15h-1.15zM255.9 347.9h1.15v1.15h-1.15zM305.9 332.3h1.15v1.15h-1.15zM42.2 439.8h1.15v1.15h-1.15zM259.4 396.3h1.15v1.15h-1.15zM276.9 334.8h1.15v1.15h-1.15zM162.5 386.2h1.15v1.15h-1.15zM101.0 374.2h1.15v1.15h-1.15zM97.4 434.5h1.15v1.15h-1.15zM265.8 403.8h1.15v1.15h-1.15zM79.6 439.2h1.15v1.15h-1.15zM210.1 386.3h1.15v1.15h-1.15zM289.8 370.7h1.15v1.15h-1.15zM122.6 373.9h1.15v1.15h-1.15zM85.7 418.6h1.15v1.15h-1.15zM60.6 436.9h1.15v1.15h-1.15zM90.5 376.5h1.15v1.15h-1.15zM353.7 303.9h1.15v1.15h-1.15zM53.2 438.7h1.15v1.15h-1.15zM320.7 375.2h1.15v1.15h-1.15zM111.3 406.9h1.15v1.15h-1.15z" fill="#c8c800"/>
<polyline points="40.00,222.00 40.90,205.00 41.30,220.00 42.20,204.00 43.40,225.00 44.70,211.70 45.90,215.00 48.00,196.70 49.25,206.70 51.30,227.50 53.27,225.00 55.23,222.50 57.20,220.00 59.13,217.23 61.07,214.47 63.00,211.70 64.25,212.85 65.50,214.00 67.15,212.00 68.80,210.00 70.05,211.65 71.30,213.30 72.55,210.40 73.80,207.50 75.50,216.70 77.60,205.00 79.25,222.50 81.30,203.30 83.40,223.30 85.50,200.80 87.35,212.05 89.20,223.30 91.25,213.30 93.30,203.30 95.40,214.15 97.50,225.00 99.43,217.77 101.37,210.53 103.30,203.30 105.40,210.53 107.50,217.77 109.60,225.00 111.53,219.73 113.47,214.47 115.40,209.20 117.20,213.90 119.00,218.60 120.80,223.30 122.05,217.05 123.30,210.80 125.40,227.50 127.30,218.55 129.20,209.60 130.65,217.70 132.10,225.80 133.00,224.00 134.75,221.25 136.50,218.50 138.25,215.75 140.00,213.00 142.00,217.25 144.00,218.00 145.50,229.41 147.00,237.00 149.00,232.98 151.00,224.00 152.75,228.52 154.50,229.50 156.25,226.08 158.00,219.00 159.67,222.29 161.33,220.34 163.00,223.00 164.67,229.17 166.33,229.64 168.00,236.00 169.50,232.53 171.00,224.50 173.00,235.00 174.50,226.00 176.50,230.79 178.50,231.69 180.50,237.98 182.50,238.10 184.50,244.00 186.33,241.79 188.17,234.23 190.00,231.00 191.50,235.00 193.00,244.00 194.50,232.00 196.25,242.57 198.00,248.00 200.00,238.00 201.67,245.21 203.33,245.27 205.00,252.00 206.50,242.00 208.50,249.00 210.00,248.33 211.50,242.38 213.00,241.00 214.25,247.06 215.50,251.00 217.00,249.36 218.50,242.87 220.00,240.50 221.25,248.59 222.50,254.00 223.75,251.42 225.00,246.00 227.00,258.00 228.50,248.50 230.60,252.29 232.70,252.14 234.80,258.33 236.90,256.95 239.00,262.00 241.00,261.18 243.00,254.63 245.00,254.00 246.50,263.00 248.50,262.65 250.50,256.59 252.50,256.50 254.25,262.25 256.00,264.50 258.00,267.47 260.00,267.50 261.75,275.35 263.50,278.00 265.00,273.34 266.50,263.50 268.50,272.00 270.00,271.35 271.50,266.00 273.25,273.14 275.00,276.00 277.17,274.53 279.33,268.60 281.50,267.00 283.50,278.00 284.75,274.74 286.00,268.50 288.00,275.40 290.00,280.00 291.50,280.74 293.00,275.34 294.50,275.50 295.75,277.11 297.00,274.00 298.75,280.14 300.50,283.00 302.00,285.20 303.50,279.97 305.00,282.00 306.60,282.04 308.20,280.00 310.00,287.50 311.70,285.20 313.23,289.10 314.77,287.81 316.30,292.80 318.10,285.80 319.55,288.17 321.00,287.00 322.15,290.97 323.30,289.80 324.87,297.69 326.43,301.11 328.00,308.50 329.15,307.02 330.30,301.50 331.87,305.19 333.43,304.95 335.00,308.00 337.00,304.80 339.00,300.30 340.60,303.83 342.20,303.68 343.80,308.00 346.00,301.50 347.50,306.75 349.00,309.00 351.05,309.44 353.10,307.65 355.15,308.92 357.20,308.00 358.35,312.97 359.50,316.70 361.25,315.29 363.00,310.80 365.00,314.40 367.20,320.76 369.40,325.60 371.30,320.60 373.15,323.44 375.00,323.80 376.25,323.65 377.50,321.30 379.40,328.63 381.30,334.40 383.10,333.10 384.70,334.56 386.30,333.10 387.97,332.14 389.63,328.42 391.30,328.10 393.45,333.49 395.60,337.50 397.50,333.80 399.40,343.10 400.65,342.02 401.90,338.80 403.80,343.10 405.00,341.90 406.25,346.76 407.50,350.00 409.70,347.78 411.90,343.80 413.75,350.56 415.60,353.80 416.85,354.10 418.10,351.30 419.70,355.02 421.30,356.90 422.55,358.55 423.80,356.90 425.67,361.24 427.53,362.93 429.40,367.50 431.30,365.00 432.55,369.42 433.80,370.60 435.50,370.00" fill="none" stroke="#22a8e0" stroke-width="1.0" stroke-linejoin="miter" stroke-miterlimit="3"/>
</svg>
<div class="t" style="left:39.6px;top:138.4px;font-size:9.5px;color:#222;">MB/s</div>
<div class="t" style="left:423.3px;top:138.6px;font-size:9.5px;color:#222;">ms</div>
<div class="t" style="right:564.5px;top:144.9px;font-size:10px;letter-spacing:-0.35px;color:#222">200</div>
<div class="t" style="right:564.5px;top:233.9px;font-size:10px;letter-spacing:-0.35px;color:#222">150</div>
<div class="t" style="right:564.5px;top:323.9px;font-size:10px;letter-spacing:-0.35px;color:#222">100</div>
<div class="t" style="right:564.5px;top:413.9px;font-size:10px;letter-spacing:-0.35px;color:#222">50</div>
<div class="t" style="left:440px;top:144.9px;font-size:10px;color:#222;letter-spacing:-0.35px">40</div>
<div class="t" style="left:440px;top:233.9px;font-size:10px;color:#222;letter-spacing:-0.35px">30</div>
<div class="t" style="left:440px;top:323.9px;font-size:10px;color:#222;letter-spacing:-0.35px">20</div>
<div class="t" style="left:440px;top:413.9px;font-size:10px;color:#222;letter-spacing:-0.35px">10</div>
<div class="t" style="left:9.2px;width:60px;text-align:center;top:513px;font-size:9.5px;color:#222">0</div>
<div class="t" style="left:48.8px;width:60px;text-align:center;top:513px;font-size:9.5px;color:#222">200</div>
<div class="t" style="left:88.4px;width:60px;text-align:center;top:513px;font-size:9.5px;color:#222">400</div>
<div class="t" style="left:128.0px;width:60px;text-align:center;top:513px;font-size:9.5px;color:#222">600</div>
<div class="t" style="left:167.6px;width:60px;text-align:center;top:513px;font-size:9.5px;color:#222">800</div>
<div class="t" style="left:207.2px;width:60px;text-align:center;top:513px;font-size:9.5px;color:#222">1000</div>
<div class="t" style="left:246.8px;width:60px;text-align:center;top:513px;font-size:9.5px;color:#222">1200</div>
<div class="t" style="left:286.4px;width:60px;text-align:center;top:513px;font-size:9.5px;color:#222">1400</div>
<div class="t" style="left:326.0px;width:60px;text-align:center;top:513px;font-size:9.5px;color:#222">1600</div>
<div class="t" style="left:365.6px;width:60px;text-align:center;top:513px;font-size:9.5px;color:#222">1800</div>
<div class="t" style="left:419px;top:513px;font-size:9.5px;color:#222;">2000gB</div>
<div class="a" style="left:474px;top:131px;width:75px;height:24px;background:#e1e1e1;border:2px solid #0078d7"></div>
<div class="a" style="left:476px;top:133px;width:71px;height:20px;border:1px dotted #444"></div>
<div class="t" style="left:500.3px;top:137px;font-size:11px;color:#000;letter-spacing:-0.6px;">开始</div>
<div class="a" style="left:467px;top:166px;width:102px;height:1px;background:#c8c8c8"></div>
<div class="a" style="left:467px;top:211px;width:102px;height:1px;background:#c8c8c8"></div>
<div class="a" style="left:467px;top:291px;width:102px;height:1px;background:#c8c8c8"></div>
<div class="a" style="left:467px;top:410px;width:102px;height:1px;background:#c8c8c8"></div>
<div class="a" style="left:470.5px;top:176px;width:11px;height:11px;border:1.3px solid #555;border-radius:50%;background:#fff"></div>
<div class="a" style="left:473px;top:178.5px;width:6px;height:6px;border-radius:50%;background:#333"></div>
<div class="t" style="left:484.3px;top:177px;font-size:11px;color:#000;letter-spacing:-0.6px;">读取</div>
<div class="a" style="left:470.5px;top:194.2px;width:11px;height:11px;border:1.3px solid #555;border-radius:50%;background:#fff"></div>
<div class="t" style="left:484.3px;top:194.6px;font-size:11px;color:#000;letter-spacing:-0.6px;">写入</div>
<div class="a" style="left:471px;top:222px;width:11px;height:11px;border:1px solid #3c3c3c;background:#fff"></div>
<div class="t" style="left:484.3px;top:223px;font-size:11px;color:#000;letter-spacing:-0.6px;">快捷行程</div>
<div class="a" style="left:471px;top:242px;width:62px;height:22px;border:1px solid #cfcfcf;background:#fff"></div>
<div class="a" style="left:518px;top:243px;width:14px;height:20px;border-left:1px solid #e0e0e0;background:#f4f4f4"></div>
<div class="a" style="left:519px;top:253px;width:13px;height:1px;background:#e0e0e0"></div>
<svg class="a" style="left:522px;top:246px" width="7" height="15"><path d="M1 4L3.5 1.5L6 4Z" fill="#777"/><path d="M1 11L3.5 13.5L6 11Z" fill="#777"/></svg>
<div class="t" style="left:474.2px;top:246.8px;font-size:11.5px;color:#858585;">40</div>
<div class="t" style="left:545.5px;top:248.5px;font-size:10.5px;color:#000;">GB</div>
<div class="a" style="left:471px;top:277.5px;width:11px;height:11px;border:1px solid #3c3c3c;background:#fff"></div><svg class="a" style="left:471px;top:277.5px" width="11" height="11"><path d="M1.8 5.2L4.4 8.2L9.6 2" stroke="#3c3c3c" fill="none" stroke-width="1.35"/></svg>
<div class="t" style="left:484.3px;top:278.3px;font-size:11px;color:#000;letter-spacing:-0.6px;">传输速率</div>
<div class="t" style="left:470.3px;top:298px;font-size:11px;color:#000;letter-spacing:-0.6px;">最低</div>
<div class="t" style="left:470.3px;top:336px;font-size:11px;color:#000;letter-spacing:-0.6px;">最高</div>
<div class="t" style="left:470.3px;top:370px;font-size:11px;color:#000;letter-spacing:-0.6px;">平均</div>
<div class="a" style="left:471px;top:419px;width:11px;height:11px;border:1px solid #3c3c3c;background:#fff"></div><svg class="a" style="left:471px;top:419px" width="11" height="11"><path d="M1.8 5.2L4.4 8.2L9.6 2" stroke="#3c3c3c" fill="none" stroke-width="1.35"/></svg>
<div class="t" style="left:484.3px;top:419.8px;font-size:11px;color:#000;letter-spacing:-0.6px;">存取时间</div>
<div class="a" style="left:471px;top:458px;width:11px;height:11px;border:1px solid #3c3c3c;background:#fff"></div><svg class="a" style="left:471px;top:458px" width="11" height="11"><path d="M1.8 5.2L4.4 8.2L9.6 2" stroke="#3c3c3c" fill="none" stroke-width="1.35"/></svg>
<div class="t" style="left:484.3px;top:458.8px;font-size:11px;color:#000;letter-spacing:-0.6px;">突发速率</div>
<div class="t" style="left:470.3px;top:495px;font-size:11px;color:#000;letter-spacing:-0.6px;">CPU&nbsp;&nbsp;占用率</div>
<div class="lcd" style="left:471px;top:312.5px;width:94px;height:17px"></div><div class="t" style="left:491.5px;top:315.0px;font-size:10px;color:#1ab0f0;font-family:&quot;Liberation Mono&quot;,monospace;font-weight:bold">76.8 MB/s</div>
<div class="lcd" style="left:471px;top:350px;width:94px;height:17px"></div><div class="t" style="left:487.5px;top:352.5px;font-size:10px;color:#1ab0f0;font-family:&quot;Liberation Mono&quot;,monospace;font-weight:bold">173.0 MB/s</div>
<div class="lcd" style="left:471px;top:385px;width:94px;height:17px"></div><div class="t" style="left:487.5px;top:387.5px;font-size:10px;color:#1ab0f0;font-family:&quot;Liberation Mono&quot;,monospace;font-weight:bold">135.1 MB/s</div>
<div class="lcd" style="left:471px;top:434px;width:94px;height:17px"></div><div class="t" style="left:496.5px;top:436.5px;font-size:10px;color:#f0f000;font-family:&quot;Liberation Mono&quot;,monospace;font-weight:bold">15.2 毫</div>
<div class="lcd" style="left:471px;top:472.5px;width:94px;height:17px"></div><div class="t" style="left:487.5px;top:475.0px;font-size:10px;color:#fff;font-family:&quot;Liberation Mono&quot;,monospace;font-weight:bold">227.3 MB/s</div>
<div class="lcd" style="left:471px;top:510px;width:94px;height:17px"></div><div class="t" style="left:505px;top:512.5px;font-size:10px;color:#fff;font-family:&quot;Liberation Mono&quot;,monospace;font-weight:bold">6.4%</div>
<div class="a" style="left:474px;top:509px;width:25px;height:25px;border-radius:50%;background:#fff;box-shadow:0 0 1.5px rgba(0,0,0,.45)"></div>
<div class="t" style="left:478.5px;top:513.5px;font-size:15.5px;color:#1a1a1a;font-weight:bold">值</div>
<div class="t" style="left:506.5px;top:513.5px;font-size:17.5px;color:#fff;letter-spacing:-0.3px;text-shadow:0 0 1px rgba(0,0,0,.55),0.5px 0.5px 1px rgba(0,0,0,.3)">什么值得买</div>
</body></html>
